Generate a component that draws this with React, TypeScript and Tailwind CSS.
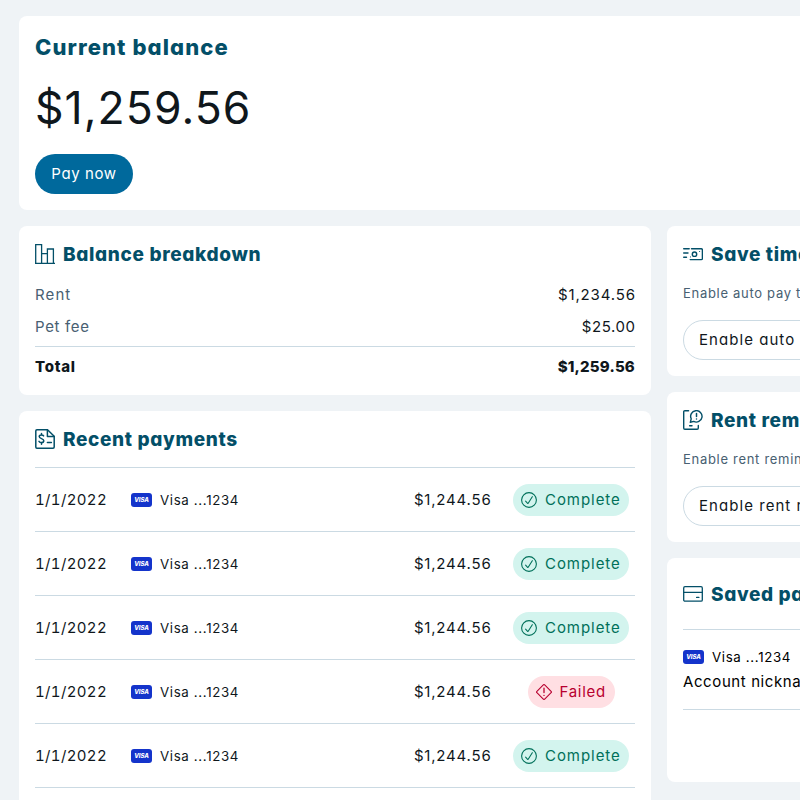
import type { ReactNode } from "react";

function BarsIcon() {
  return (
    <svg className="h-5 w-5 shrink-0" viewBox="0 0 20 20" fill="none" stroke="#034f68" strokeWidth="1.3">
      <path d="M.7 19.400V.7h5.900v18.700M6.600 9.600h5.800M12.400 19.400V5h6v14.400M0 19.400h20" />
    </svg>
  );
}

function InvoiceIcon() {
  return (
    <svg className="h-5 w-5 shrink-0" viewBox="0 0 20 20" fill="none" stroke="#034f68" strokeWidth="1.500" strokeLinecap="round" strokeLinejoin="round">
      <path d="M1.900.8h10.600l6.700 6.500v10.700c0 .7-.5 1.200-1.200 1.200H1.900c-.7 0-1.100-.5-1.100-1.200V1.900C.8 1.200 1.200.8 1.900.8z" />
      <path d="M12.400 1v6.400h6.700M12.400 13.500h4" />
      <path d="M8.600 6.900c-.4-.7-1.100-1-2.100-1-1.400 0-2.300.7-2.300 1.700 0 2.600 4.600 1.500 4.600 4.100 0 1.100-.9 1.800-2.300 1.800-1.100 0-2-.4-2.500-1.200M6.500 4.500v1.400M6.500 13.500v1.700" />
    </svg>
  );
}

function CashIcon() {
  return (
    <svg className="h-5 w-5 shrink-0" viewBox="0 0 20 20" fill="none" stroke="#034f68" strokeWidth="1.400" strokeLinecap="round">
      <path d="M.7 4.700h5.500M8.500 4.700h9.700c.7 0 1.200.5 1.200 1.200v8.500c0 .7-.5 1.200-1.200 1.200H7.200M.7 9h4.300M.7 13.300h2.800" />
      <path d="M16.600 7.500v.1M7.500 12.900v.1" strokeWidth="1" />
      <circle cx="11.500" cy="10.200" r="2.200" />
    </svg>
  );
}

function ReminderIcon() {
  return (
    <svg className="h-5 w-5 shrink-0" viewBox="0 0 20 20" fill="none" stroke="#034f68" strokeWidth="1.400" strokeLinecap="round" strokeLinejoin="round">
      <path d="M5.600.7H1.900C1.200.7.7 1.200.7 1.900v16.200c0 .7.5 1.200 1.200 1.200h12.200c.7 0 1.200-.5 1.200-1.200v-2.600M6.600 15.700h2.400" />
      <path d="M7.300 12.300l.9-3.500a5.700 5.700 0 1 1 2.500 2.600z" />
      <path d="M13.500 3.600v3M13.500 8.900v.1" strokeWidth="1.500" />
    </svg>
  );
}

function CardIcon() {
  return (
    <svg className="h-5 w-5 shrink-0" viewBox="0 0 20 20" fill="none" stroke="#034f68" strokeWidth="1.300" strokeLinecap="round">
      <rect x=".7" y="2.700" width="18.600" height="14.500" rx="1.300" />
      <path d="M.7 8.300h18.600M13.600 13.400h2.300" />
    </svg>
  );
}

function VisaMark() {
  return (
    <span className="flex h-[14px] w-[21px] shrink-0 items-center justify-center rounded-[3px] bg-[#1434cb] text-[6px] font-extrabold italic leading-none tracking-[-0.1px] text-white">
      VISA
    </span>
  );
}

function Title({ icon, children }: { icon: ReactNode; children: ReactNode }) {
  return (
    <div className="flex h-6 items-center gap-2">
      {icon}
      <h2 className="whitespace-nowrap pt-0.5 text-[19px] font-extrabold leading-6 tracking-[0.65px] text-[#034f68] [font-feature-settings:'cv11']">
        {children}
      </h2>
    </div>
  );
}

function Badge({ failed }: { failed: boolean }) {
  return failed ? (
    <span className="flex h-8 w-[87px] items-center gap-2 rounded-full bg-[#ffdfe3] pl-2 text-[15px] tracking-[0.7px] text-[#b8002f]">
      <svg className="h-4 w-4 shrink-0" viewBox="0 0 16 16" fill="none" stroke="currentColor" strokeWidth="1.100" strokeLinecap="round" strokeLinejoin="round">
        <path d="M7.300.9.900 7.300a1 1 0 0 0 0 1.400l6.400 6.400a1 1 0 0 0 1.400 0l6.400-6.400a1 1 0 0 0 0-1.400L8.700.9a1 1 0 0 0-1.400 0z" />
        <path d="M8 4.200v4.300M8 11.300v.1" strokeWidth="1.300" />
      </svg>
      Failed
    </span>
  ) : (
    <span className="flex h-8 w-[116px] items-center gap-2 rounded-full bg-[#d3f4ee] pl-2 text-[15px] tracking-[0.95px] text-[#00705a]">
      <svg className="h-4 w-4 shrink-0" viewBox="0 0 16 16" fill="none" stroke="currentColor" strokeWidth="1.100" strokeLinecap="round" strokeLinejoin="round">
        <circle cx="8" cy="8" r="7.400" />
        <path d="M4.600 9.200l2 2.100c.2.200.5.200.6-.1L11.300 4.700" />
      </svg>
      Complete
    </span>
  );
}

const payments = [false, false, false, true, false];

function OutlineButton({ children }: { children: ReactNode }) {
  return (
    <button className="flex h-10 w-[272px] items-center whitespace-nowrap rounded-full border border-[#cbdae3] px-[15px] text-[15px] tracking-[1.05px] text-[#0f171c] [font-feature-settings:'cv11']">
      {children}
    </button>
  );
}

function Description({ children }: { children: ReactNode }) {
  return (
    <p className="mb-4 mt-[17px] whitespace-nowrap text-[13px] leading-[21px] tracking-[0.7px] text-[#486072]">{children}</p>
  );
}

export default function App() {
  return (
    <div className="h-[800px] w-[800px] overflow-hidden bg-[#eff3f6] font-['Inter',sans-serif] leading-6 text-[#0f171c]">
      <div className="grid w-[955px] grid-cols-[632px_304px] items-start gap-4 pl-[19px] pt-4">
        <section className="col-span-2 h-[194px] rounded-lg bg-white p-4">
          <h1 className="text-[22px] font-extrabold leading-[31px] tracking-[1.1px] text-[#034f68] [font-feature-settings:'cv11']">Current balance</h1>
          <div className="mt-[15px] h-[60px] text-[44.5px] leading-[60px] tracking-[1.05px]">$1,259.56</div>
          <button className="mt-4 flex h-10 w-[98px] items-center justify-center rounded-full bg-[#00699c] text-[15px] tracking-[0.6px] text-white [font-feature-settings:'cv11']">
            Pay now
          </button>
        </section>

        <div className="flex flex-col gap-4">
          <section className="h-[169px] rounded-lg bg-white p-4 text-[15px] tracking-[0.85px]">
            <Title icon={<BarsIcon />}>Balance breakdown</Title>
            <div className="mt-[13px] flex h-8 items-center justify-between">
              <span className="tracking-[1.1px] text-[#486072]">Rent</span>
              <span className="-mr-[0.8px]">$1,234.56</span>
            </div>
            <div className="flex h-8 items-center justify-between">
              <span className="tracking-[0.65px] text-[#486072]">Pet fee</span>
              <span className="-mr-[0.5px] tracking-[0.55px]">$25.00</span>
            </div>
            <div className="mt-[3px] flex h-10 items-center justify-between border-t border-[#cbdae3] font-extrabold">
              <span className="tracking-[0.7px]">Total</span>
              <span className="tracking-[0.2px]">$1,259.56</span>
            </div>
          </section>

          <section className="h-[460px] rounded-lg bg-white p-4 text-[15px]">
            <Title icon={<InvoiceIcon />}>Recent payments</Title>
            <div className="mt-4 border-t border-[#cbdae3]">
              {payments.map((failed, i) => (
                <div key={i} className="flex h-16 items-center border-b border-[#cbdae3]">
                  <span className="w-24 tracking-[0.35px] [font-feature-settings:'tnum']">1/1/2022</span>
                  <span className="flex flex-1 items-center gap-2 text-[13.3px] tracking-[0.65px]">
                    <VisaMark />
                    Visa ...1234
                  </span>
                  <span className="mr-[15.5px] tracking-[0.8px]">$1,244.56</span>
                  <span className="flex w-32 justify-center">
                    <Badge failed={failed} />
                  </span>
                </div>
              ))}
            </div>
          </section>
        </div>

        <div className="flex flex-col gap-4">
          <section className="h-[150px] rounded-lg bg-white p-4">
            <Title icon={<CashIcon />}>Save time with auto pay</Title>
            <Description>Enable auto pay to save time</Description>
            <OutlineButton>Enable auto pay</OutlineButton>
          </section>
          <section className="h-[150px] rounded-lg bg-white p-4">
            <Title icon={<ReminderIcon />}>Rent reminders</Title>
            <Description>Enable rent reminders</Description>
            <OutlineButton>Enable rent reminders</OutlineButton>
          </section>
          <section className="h-[224px] rounded-lg bg-white px-4 pt-6">
            <Title icon={<CardIcon />}>Saved payment</Title>
            <div className="mt-[23px] h-[81px] border-y border-[#cbdae3] pt-[15px] text-black">
              <div className="flex h-6 items-center gap-2 text-[13.3px] tracking-[0.65px]">
                <VisaMark />
                Visa ...1234
              </div>
              <div className="whitespace-nowrap text-[15px] leading-[26px] tracking-[0.6px]">Account nickname</div>
            </div>
          </section>
        </div>
      </div>
    </div>
  );
}
